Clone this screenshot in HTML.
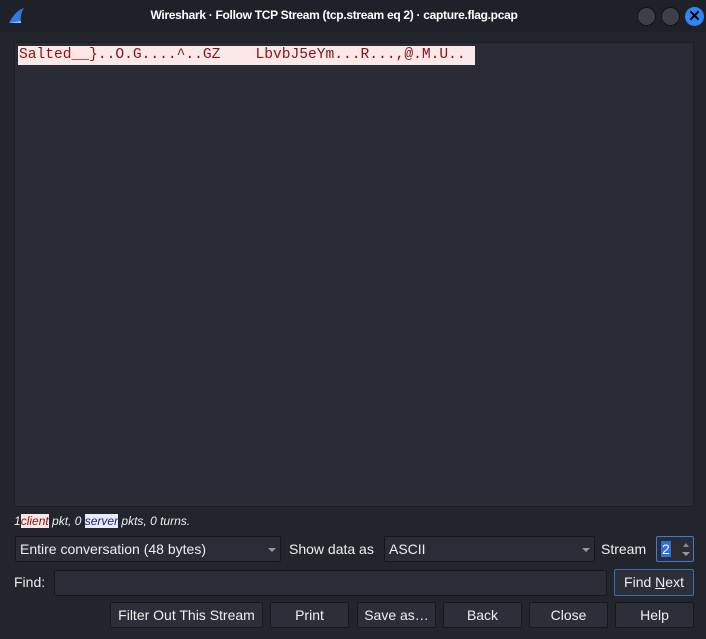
<!DOCTYPE html>
<html><head><meta charset="utf-8"><style>
*{box-sizing:border-box;margin:0;padding:0}
body{width:706px;height:639px;background:#23252d;font-family:"Liberation Sans",sans-serif;color:#e6e6e6;position:relative;overflow:hidden;font-size:14px}
.abs{position:absolute}
.title{left:0;top:0;width:706px;height:32px;background:#1f2128;}
.title .t{left:0;width:668px;top:8px;text-align:center;font-size:12px;font-weight:bold;color:#fff;letter-spacing:-0.3px}
.circ{width:19px;height:19px;border-radius:50%;background:#3d4049;border:1px solid #111;top:7px}
.ta{left:14px;top:42px;width:680px;height:465px;background:#292c35;border:1px solid #1b1d22}
.line{left:18px;top:46px;width:457px;height:19px;background:#fbe9e9;color:#8b1010;font-family:"Liberation Mono",monospace;font-size:14.6px;line-height:19px;padding-left:1px;white-space:pre}
.box{background:#2a2d36;border:1px solid #15171b;border-radius:2px}
.btn{background:#2c2f38;border:1px solid #15171b;border-radius:2px;text-align:center;line-height:24px;font-size:14px;color:#eee}
.lbl{font-size:14px;color:#eee}
.arr{width:0;height:0;border-left:4px solid transparent;border-right:4px solid transparent;border-top:4px solid #999}
</style></head><body>
<div class="abs title">
 <svg class="abs" style="left:8px;top:7px" width="17" height="17" viewBox="0 0 17 17"><path d="M1 16 C4 10 9 3 16 1 C13 5 12 11 13 16 Z" fill="#2a7de1"/><path d="M1 16 L13 16 L13 14 Z" fill="#8ec4ff"/></svg>
 <div class="abs t">Wireshark · Follow TCP Stream (tcp.stream eq 2) · capture.flag.pcap</div>
 <div class="abs circ" style="left:637px"></div>
 <div class="abs circ" style="left:661px"></div>
 <div class="abs" style="left:685px;top:7px;width:19px;height:19px;border-radius:50%;background:#2e86f0;color:#000;font-weight:bold;font-size:15px;line-height:19px;text-align:center">✕</div>
</div>
<div class="abs ta"></div>
<div class="abs line">Salted__}..O.G....^..GZ    LbvbJ5eYm...R...,@.M.U..</div>
<div class="abs" style="left:14px;top:514px;font-size:12px;font-style:italic;color:#eee;white-space:pre">1<span style="background:#fbe9e9;color:#8b1010">client</span> pkt, 0 <span style="background:#e9eafb;color:#1a1a8b">server</span> pkts, 0 turns.</div>
<div class="abs box" style="left:15px;top:536px;width:266px;height:26px"><span class="abs lbl" style="left:4px;top:4px">Entire conversation (48 bytes)</span><div class="abs arr" style="left:252px;top:11px"></div></div>
<div class="abs lbl" style="left:289px;top:541px">Show data as</div>
<div class="abs box" style="left:384px;top:536px;width:211px;height:26px"><span class="abs lbl" style="left:4px;top:4px">ASCII</span><div class="abs arr" style="left:197px;top:11px"></div></div>
<div class="abs lbl" style="left:601px;top:541px">Stream</div>
<div class="abs box" style="left:656px;top:536px;width:38px;height:26px;border:1px solid #3a7bd5"><span class="abs" style="left:4px;top:4px;background:#2e6fd8;color:#fff;font-size:14px;line-height:16px;padding:0 1px">2</span><div class="abs" style="left:26px;top:6px;border-left:3px solid transparent;border-right:3px solid transparent;border-bottom:4px solid #888"></div><div class="abs arr" style="left:25px;top:15px"></div></div>
<div class="abs lbl" style="left:14px;top:574px">Find:</div>
<div class="abs box" style="left:54px;top:570px;width:553px;height:26px"></div>
<div class="abs btn" style="left:614px;top:569px;width:80px;height:27px;border-color:#3a6fb5;line-height:25px">Find <u>N</u>ext</div>
<div class="abs btn" style="left:110px;top:602px;width:153px;height:26px">Filter Out This Stream</div>
<div class="abs btn" style="left:270px;top:602px;width:79px;height:26px">Print</div>
<div class="abs btn" style="left:357px;top:602px;width:79px;height:26px">Save as…</div>
<div class="abs btn" style="left:443px;top:602px;width:79px;height:26px">Back</div>
<div class="abs btn" style="left:529px;top:602px;width:79px;height:26px">Close</div>
<div class="abs btn" style="left:615px;top:602px;width:79px;height:26px">Help</div>
</body></html>
